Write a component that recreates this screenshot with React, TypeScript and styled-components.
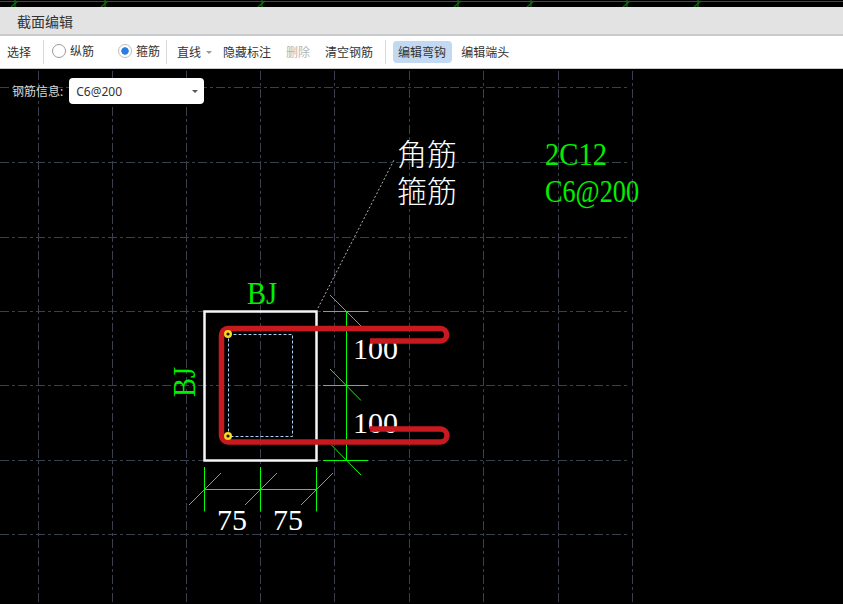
import React from "react";
import styled, { createGlobalStyle } from "styled-components";

const GlobalStyle = createGlobalStyle`
  html, body {
    margin: 0;
    padding: 0;
    background: #000;
    overflow: hidden;
  }
  body {
    font-family: "Noto Sans", "Noto Sans CJK SC", sans-serif;
  }
`;

const Page = styled.div`
  width: 843px;
  height: 604px;
  display: flex;
  flex-direction: column;
  background: #000;
`;

const TopStrip = styled.svg`
  display: block;
  flex: none;
  width: 843px;
  height: 7px;
`;

const TitleBar = styled.div`
  flex: none;
  height: 27px;
  padding-left: 17px;
  display: flex;
  align-items: center;
  background: #e3e3e3;
  border-bottom: 2px solid #c8cacd;
  font-size: 14px;
  color: #333;
`;

const Toolbar = styled.div`
  flex: none;
  height: 32px;
  padding-left: 7px;
  display: flex;
  align-items: center;
  background: #fff;
  border-bottom: 1px solid #c9c9c9;
  font-size: 12px;
  color: #333;
`;

const Tool = styled.span<{ $gap?: number; $disabled?: boolean }>`
  margin-left: ${(p) => p.$gap ?? 0}px;
  color: ${(p) => (p.$disabled ? "#b4b4b4" : "#333")};
  white-space: nowrap;
`;

const Divider = styled.i<{ $gap: number }>`
  width: 1px;
  height: 24px;
  margin-left: ${(p) => p.$gap}px;
  background: #d9d9d9;
`;

const RadioLabel = styled.label<{ $gap: number }>`
  display: flex;
  align-items: center;
  gap: 4px;
  margin-left: ${(p) => p.$gap}px;
  margin-top: -3px;
`;

const RadioDot = styled.span<{ $checked?: boolean }>`
  box-sizing: border-box;
  width: 14px;
  height: 14px;
  border-radius: 50%;
  border: 1px solid ${(p) => (p.$checked ? "#bdbdbd" : "#9a9a9a")};
  background: ${(p) =>
    p.$checked
      ? "radial-gradient(circle, #2a7de1 0 3.4px, #fff 4px)"
      : "#fff"};
`;

const LineSelect = styled.span`
  display: flex;
  align-items: center;
  gap: 5px;
  margin-left: 10px;
`;

const Caret = styled.i<{ $color: string }>`
  width: 0;
  height: 0;
  border-left: 3px solid transparent;
  border-right: 3px solid transparent;
  border-top: 3px solid ${(p) => p.$color};
`;

const ActiveTool = styled.span`
  margin-left: 7px;
  padding: 0 6px 0 5px;
  height: 22px;
  display: flex;
  align-items: center;
  border-radius: 4px;
  background: #c3d9f1;
`;

const Canvas = styled.div`
  position: relative;
  flex: 1;
  overflow: hidden;
`;

const Drawing = styled.svg`
  display: block;
  width: 843px;
  height: 535px;
`;

const RebarInfo = styled.div`
  position: absolute;
  left: 12px;
  top: 9px;
  display: flex;
  align-items: center;
  gap: 6px;
  font-size: 12px;
  color: #d8d8d8;
`;

const InfoSelect = styled.div`
  box-sizing: border-box;
  width: 135px;
  height: 26px;
  padding: 0 6px 0 7px;
  display: flex;
  align-items: center;
  justify-content: space-between;
  border-radius: 4px;
  background: #fff;
  color: #333;
`;

const GridLine = styled.line`
  stroke: #3a3f4d;
  stroke-width: 1;
  stroke-dasharray: 9 3 3 3;
`;

const DimLine = styled.line`
  stroke: #00ff00;
  stroke-width: 1;
`;

const Rebar = styled.path`
  fill: none;
  stroke: #c8191f;
  stroke-width: 5.5;
`;

const CadText = styled.text<{ $green?: boolean; $size?: number; $thin?: boolean }>`
  font-family: "Liberation Serif", "Noto Sans CJK SC", serif;
  font-size: ${(p) => p.$size ?? 30}px;
  font-weight: ${(p) => (p.$thin ? 300 : 400)};
  fill: ${(p) => (p.$green ? "#00f000" : "#fff")};
`;

const gridX = [38.5, 112.5, 186.5, 260.5, 334.5, 409.5, 483.5, 558.5, 632.5];
const gridY = [87.5, 162.5, 237.5, 311.5, 385.5, 460.5, 534.5];
const topTicks = [15, 105, 262, 458, 531, 627, 698];

// leader ticks on the dimension lines: [x1, y1, x2, y2]
const dimLines = [
  [346.5, 311, 346.5, 460],
  [323, 311.5, 368, 311.5],
  [323, 385.5, 368, 385.5],
  [323, 460.5, 368, 460.5],
  [330, 295, 361, 326],
  [330, 369, 361, 400.5],
  [331.5, 445, 361, 475],
  [204.5, 489.5, 316.5, 489.5],
  [204.5, 467, 204.5, 511.5],
  [260.5, 467, 260.5, 511.5],
  [316.5, 467, 316.5, 511.5],
  [189, 505, 221, 473],
  [245, 505, 277, 473],
  [301, 505, 333, 473],
];

export default function App() {
  return (
    <Page>
      <GlobalStyle />
      <TopStrip viewBox="0 0 843 7">
        <line x1="0" y1="1.5" x2="843" y2="1.5" stroke="#0e6e0e" strokeWidth="1" />
        {topTicks.map((x) => (
          <g key={x} stroke="#0e6e0e" strokeWidth="1.2">
            <line x1={x} y1="0" x2={x} y2="7" />
            <line x1={x + 3} y1="1" x2={x - 4} y2="7" />
          </g>
        ))}
      </TopStrip>
      <TitleBar>截面编辑</TitleBar>
      <Toolbar>
        <Tool>选择</Tool>
        <Divider $gap={12} />
        <RadioLabel $gap={8}>
          <RadioDot />
          <span>纵筋</span>
        </RadioLabel>
        <RadioLabel $gap={24}>
          <RadioDot $checked />
          <span>箍筋</span>
        </RadioLabel>
        <Divider $gap={6} />
        <LineSelect>
          直线
          <Caret $color="#999" />
        </LineSelect>
        <Tool $gap={11}>隐藏标注</Tool>
        <Tool $gap={15} $disabled>
          删除
        </Tool>
        <Tool $gap={15}>清空钢筋</Tool>
        <Divider $gap={12} />
        <ActiveTool>编辑弯钩</ActiveTool>
        <Tool $gap={9}>编辑端头</Tool>
      </Toolbar>
      <Canvas>
        <Drawing viewBox="0 69 843 535">
          {gridX.map((x) => (
            <GridLine key={x} x1={x} y1="71" x2={x} y2="604" />
          ))}
          {gridY.map((y) => (
            <GridLine key={y} x1="0" y1={y} x2="630" y2={y} />
          ))}

          <line x1="318" y1="308" x2="394" y2="160" stroke="#b0b0b0" strokeWidth="1" strokeDasharray="2 2" />

          <rect x="204.5" y="311.5" width="112" height="149" fill="none" stroke="#f6f6f6" strokeWidth="2.5" />

          {dimLines.map(([x1, y1, x2, y2]) => (
            <DimLine key={`${x1}-${y1}-${x2}`} x1={x1} y1={y1} x2={x2} y2={y2} />
          ))}

          <rect x="228.5" y="334.5" width="64" height="102" fill="none" stroke="#a8d0f5" strokeWidth="1" strokeDasharray="3 2" />

          <CadText x="353" y="359">100</CadText>
          <CadText x="353" y="433">100</CadText>
          <CadText x="217" y="530">75</CadText>
          <CadText x="273" y="530">75</CadText>

          <Rebar d="M370 341 H440.5 A6.25 6.25 0 0 0 440.5 328.5 H228 A6.5 6.5 0 0 0 221.5 335 V435.5 A6.5 6.5 0 0 0 228 442 H440.5 A6.5 6.5 0 0 0 440.5 429 H370" />

          <circle cx="228" cy="334" r="2.8" fill="#1a1a1a" stroke="#ffd820" strokeWidth="2.4" />
          <circle cx="228" cy="436" r="2.8" fill="#1a1a1a" stroke="#ffd820" strokeWidth="2.4" />

          <CadText $green $size={32} x="247" y="304" textLength={30} lengthAdjust="spacingAndGlyphs">BJ</CadText>
          <CadText $green $size={32} transform="translate(195 397)rotate(-90)" textLength={30} lengthAdjust="spacingAndGlyphs">BJ</CadText>

          <CadText $thin x="397" y="165">角筋</CadText>
          <CadText $thin x="397" y="202">箍筋</CadText>
          <CadText $green $size={32} x="545" y="165" textLength={62} lengthAdjust="spacingAndGlyphs">2C12</CadText>
          <CadText $green $size={32} x="545" y="202" textLength={94} lengthAdjust="spacingAndGlyphs">C6@200</CadText>
        </Drawing>
        <RebarInfo>
          钢筋信息:
          <InfoSelect>
            C6@200
            <Caret $color="#555" />
          </InfoSelect>
        </RebarInfo>
      </Canvas>
    </Page>
  );
}
